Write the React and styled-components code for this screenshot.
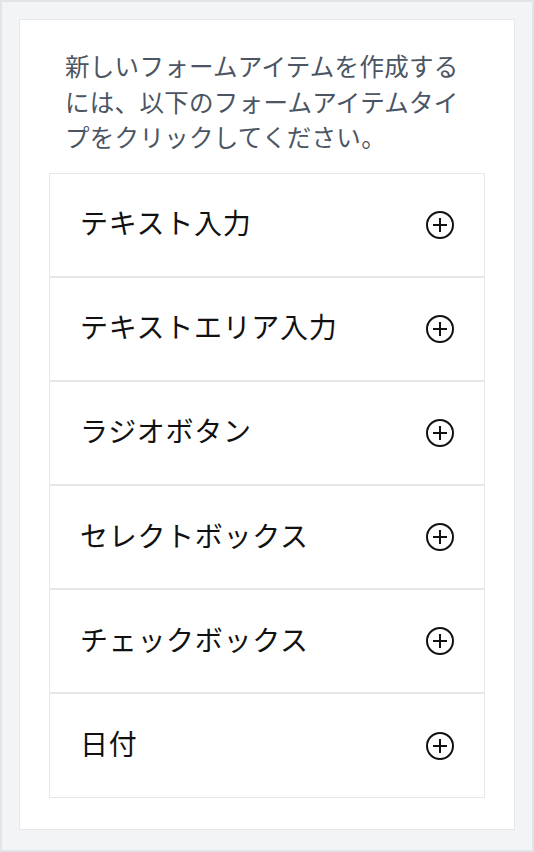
import styled, { createGlobalStyle } from 'styled-components';

const GlobalStyle = createGlobalStyle`
    * {
        box-sizing: border-box;
    }
    body {
        margin: 0;
        font-family: "Noto Sans CJK JP", "Noto Sans", sans-serif;
    }
`

const formItems = [
    'テキスト入力',
    'テキストエリア入力',
    'ラジオボタン',
    'セレクトボックス',
    'チェックボックス',
    '日付',
];

const PlusCircle = () => (
    <svg width="28" height="28" viewBox="0 0 28 28" fill="none" stroke="#111111" strokeWidth="2">
        <circle cx="14" cy="14" r="13" />
        <line x1="7" y1="14" x2="21" y2="14" />
        <line x1="14" y1="7" x2="14" y2="21" />
    </svg>
);

export default function App() {
    return (
        <Page>
            <GlobalStyle />
            <Card>
                <Intro>新しいフォームアイテムを作成するには、以下のフォームアイテムタイプをクリックしてください。</Intro>
                <ItemList>
                    {formItems.map((label) => (
                        <ItemRow key={label}>
                            <Label>{label}</Label>
                            <AddButton aria-label={`${label}を追加`}>
                                <PlusCircle />
                            </AddButton>
                        </ItemRow>
                    ))}
                </ItemList>
            </Card>
        </Page>
    );
}

const Page = styled.div`
    height: 852px;
    padding: 17px;
    background-color: #f3f4f6;
    border: 2px solid #e2e4e8;
`

const Card = styled.div`
    background-color: #ffffff;
    border: 1px solid #e5e7eb;
    padding: 28px 29px 31px;
`

const Intro = styled.p`
    margin: 0 0 18px;
    padding: 0 15px 0 16px;
    color: #4b5563;
    font-size: 24.5px;
    line-height: 35.5px;
    letter-spacing: 0.3px;
`

const ItemList = styled.div`
    display: flex;
    flex-direction: column;
`

const ItemRow = styled.div`
    display: flex;
    align-items: center;
    justify-content: space-between;
    height: 104.2px;
    padding: 0 30px 0 30px;
    border: 1px solid #e5e7eb;
    cursor: pointer;
`

const Label = styled.span`
    padding-bottom: 5px;
    color: #111111;
    font-size: 28px;
    letter-spacing: 0.7px;
`

const AddButton = styled.button`
    display: flex;
    padding: 0;
    background: none;
    border: none;
    cursor: pointer;
`
